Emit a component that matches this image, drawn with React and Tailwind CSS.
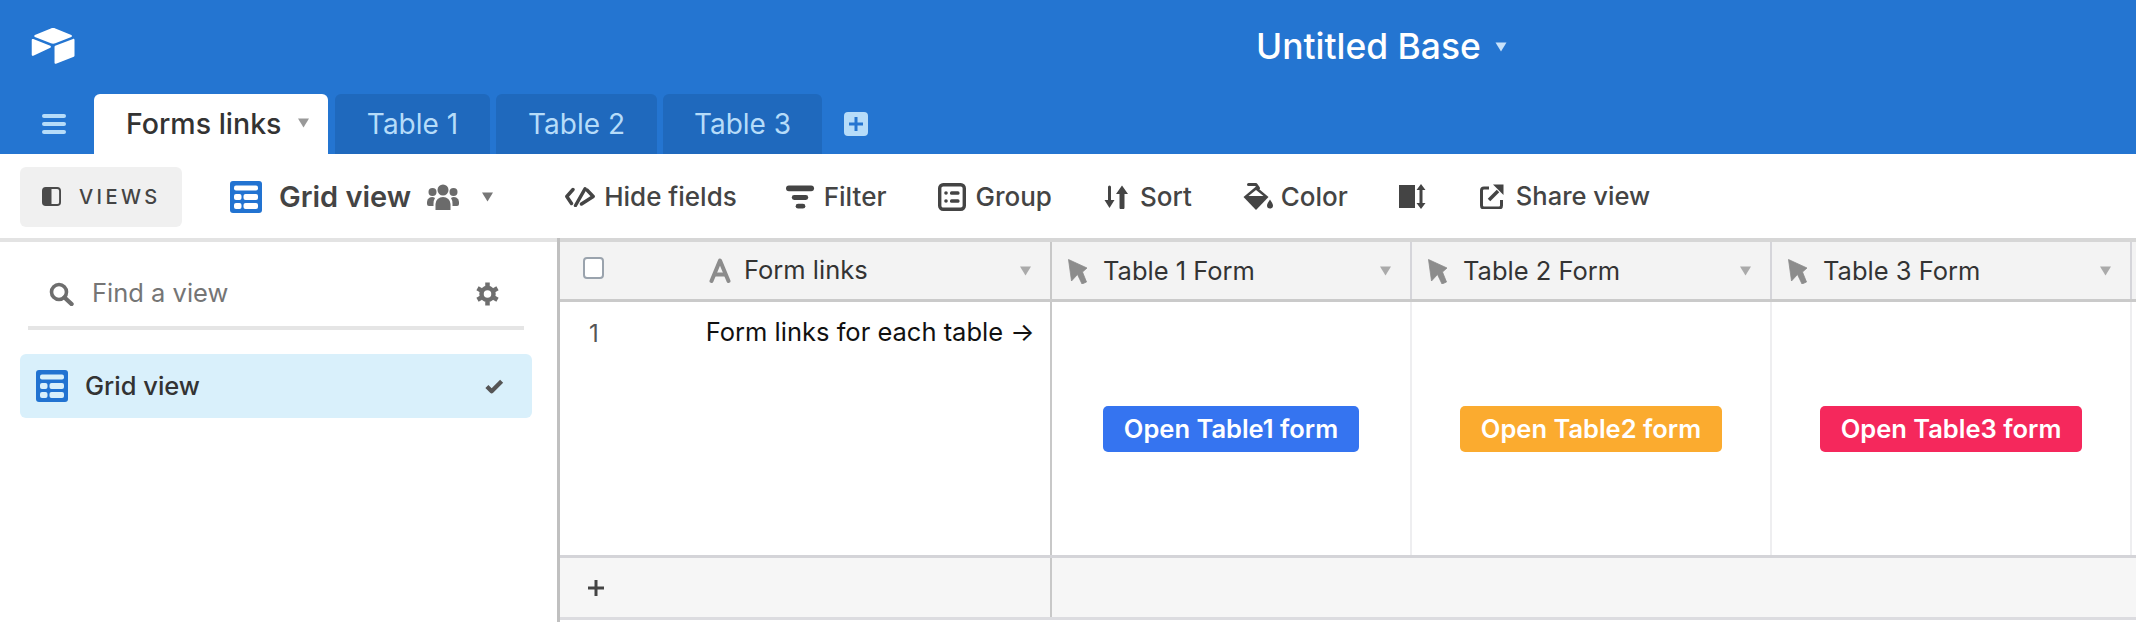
import React from "react";

const Caret = ({ className = "", fill = "#8e8e8e" }) => (
  <svg viewBox="0 0 12 10" className={className}><path d="M0.5 0.5h11L6 9.5z" fill={fill} /></svg>
);

const Logo = ({ className }) => (
  <svg viewBox="8 8 182 154" className={className} fill="#fff">
    <path d="M90.0389,12.3675 L24.0799,39.6605 C20.4119,41.1785 20.4499,46.3885 24.1409,47.8515 L90.3759,74.1175 C96.1959,76.4255 102.6769,76.4255 108.4959,74.1175 L174.7319,47.8515 C178.4219,46.3885 178.4609,41.1785 174.7919,39.6605 L108.8339,12.3675 C102.8159,9.8775 96.0559,9.8775 90.0389,12.3675" />
    <path d="M105.3122,88.4608 L105.3122,154.0768 C105.3122,157.1978 108.4592,159.3348 111.3602,158.1848 L185.1662,129.5368 C186.8512,128.8688 187.9562,127.2408 187.9562,125.4288 L187.9562,59.8128 C187.9562,56.6918 184.8092,54.5548 181.9082,55.7048 L108.1022,84.3528 C106.4182,85.0208 105.3122,86.6488 105.3122,88.4608" />
    <path d="M88.0781,91.8464 L66.1741,102.4224 L63.9501,103.4974 L17.7121,125.6524 C14.7811,127.0664 11.0401,124.9304 11.0401,121.6744 L11.0401,60.0884 C11.0401,58.9104 11.6441,57.8934 12.4541,57.1274 C12.7921,56.7884 13.1751,56.5094 13.5731,56.2884 C14.6781,55.6254 16.2541,55.4484 17.5941,55.9784 L87.7101,83.7594 C91.2741,85.1734 91.5541,90.1674 88.0781,91.8464" />
  </svg>
);

const GridIcon = ({ className, hole = "#ffffff" }) => (
  <svg viewBox="0 0 32 32" className={className}>
    <rect width="32" height="32" rx="3" fill="#2273d1" />
    <g fill={hole}>
      <rect x="4" y="4.5" width="24" height="5" rx="2" />
      <rect x="4" y="13" width="7.5" height="6" rx="2" />
      <rect x="13.5" y="13" width="14.5" height="6" rx="2" />
      <rect x="4" y="22" width="7.5" height="6" rx="2" />
      <rect x="13.5" y="22" width="14.5" height="6" rx="2" />
    </g>
  </svg>
);

const Views = () => (
  <svg viewBox="0 0 20 20" className="w-[19px] h-[19px]">
    <rect x="1" y="1" width="18" height="18" rx="3" fill="none" stroke="#4a4a4a" strokeWidth="2" />
    <path d="M1 4a3 3 0 0 1 3-3h6v18H4a3 3 0 0 1-3-3z" fill="#4a4a4a" />
  </svg>
);

const People = () => (
  <svg viewBox="0 0 32 26" className="w-[32px] h-[26px]" fill="#6b6b6b">
    <circle cx="16" cy="6" r="5.5" />
    <circle cx="5.5" cy="8" r="4" />
    <circle cx="26.5" cy="8" r="4" />
    <path d="M8.5 26v-6a7.5 7 0 0 1 15 0v6z" />
    <path d="M0 20v-2a5 5 0 0 1 8-4a10 10 0 0 0-1.5 6v2H2a2 2 0 0 1-2-2z" />
    <path d="M32 20v-2a5 5 0 0 0-8-4a10 10 0 0 1 1.5 6v2H30a2 2 0 0 0 2-2z" />
  </svg>
);

const HideIcon = () => (
  <svg viewBox="0 0 30 20" className="w-[30px] h-[20px]" fill="none" stroke="#444" strokeWidth="3.4" strokeLinecap="round" strokeLinejoin="round">
    <path d="M8 2.5L1.8 9.5L6.5 16.5" />
    <path d="M22 3L28.2 9.5L16.5 17" />
    <path d="M20 1.8L10.5 18.5" />
  </svg>
);

const FilterIcon = () => (
  <svg viewBox="0 0 30 24" className="w-[29px] h-[24px]" fill="#444">
    <rect x="0" y="0" width="29" height="6" rx="3" />
    <rect x="6" y="10" width="17" height="5" rx="2.5" />
    <rect x="10" y="19" width="10" height="5" rx="2.5" />
  </svg>
);

const GroupIcon = () => (
  <svg viewBox="0 0 28 28" className="w-[28px] h-[28px]">
    <rect x="1.7" y="1.7" width="24.6" height="24.6" rx="3.5" fill="none" stroke="#444" strokeWidth="3.4" />
    <g fill="#444">
      <circle cx="8" cy="10" r="1.8" />
      <circle cx="8" cy="18" r="1.8" />
      <rect x="12" y="8.2" width="9.5" height="3.6" rx="1.5" />
      <rect x="12" y="16.2" width="9.5" height="3.6" rx="1.5" />
    </g>
  </svg>
);

const SortIcon = () => (
  <svg viewBox="0 0 25 24" className="w-[25px] h-[24px]" fill="#444">
    <path d="M4 2a1.5 1.5 0 0 1 3 0v13h3.5L5.5 23 .5 15H4z" />
    <path d="M15.5 9H12l6-8.5L24 9h-3.5v13.5a2.5 2 0 0 1-5 0z" />
  </svg>
);

const ColorIcon = () => (
  <svg viewBox="0 0 31 28" className="w-[31px] h-[28px]">
    <path d="M5.5 1.5H13L15.5 5" fill="none" stroke="#444" strokeWidth="3" strokeLinecap="round" strokeLinejoin="round" />
    <path d="M13 3.5L25.5 14L13 27L0.5 14Z" fill="#444" />
    <path d="M13 7L20.5 13H5.500Z" fill="#fff" />
    <path d="M27 16.5c1.5 2.500 3 4.200 3 6a3 3 0 0 1-6 0c0-1.800 1.500-3.500 3-6z" fill="#444" />
  </svg>
);

const RowIcon = () => (
  <svg viewBox="0 0 27 25" className="w-[27px] h-[25px]" fill="#444">
    <rect x="0" y="1" width="16" height="23" />
    <path d="M22 0l4.5 6h-3v13h3L22 25l-4.5-6h3V6h-3z" />
  </svg>
);

const ShareIcon = () => (
  <svg viewBox="0 0 24 25" className="w-[24px] h-[25px]" fill="none" stroke="#444" strokeWidth="3">
    <path d="M9 4H4a2.5 2.5 0 0 0-2.5 2.5v15A2.500 2.500 0 0 0 4 24h15a2.500 2.500 0 0 0 2.500-2.500V16" />
    <path d="M9 16L18 7" strokeWidth="3.6" />
    <path d="M13 0.5h10.5V11z" fill="#444" stroke="none" />
  </svg>
);

const Cursor = () => (
  <svg viewBox="0 0 19 25" className="w-[19px] h-[25px]">
    <path d="M0.5 0.5L19 9L14.5 13L18.500 23L14 25L9.500 15.500L3.500 22Z" fill="#8c8c8c" strokeLinejoin="round" stroke="#8c8c8c" strokeWidth="0.800" />
  </svg>
);

const AIcon = () => (
  <svg viewBox="0 0 22 25" className="w-[22px] h-[25px]" fill="none" stroke="#8c8c8c" strokeWidth="4" strokeLinejoin="round" strokeLinecap="round">
    <path d="M2.500 23L11 2.500L19.500 23" />
    <path d="M6 16.500h10" />
  </svg>
);

const SearchIcon = () => (
  <svg viewBox="0 0 25 24" className="w-[25px] h-[24px]" fill="none" stroke="#6e6e6e">
    <circle cx="10" cy="10" r="7.5" strokeWidth="3.6" />
    <path d="M15.5 15.5L22.5 22" strokeWidth="4.4" strokeLinecap="round" />
  </svg>
);

const GearIcon = () => (
  <svg viewBox="0 0 24 24" className="w-[25px] h-[24px]">
    <circle cx="12" cy="12" r="6" fill="none" stroke="#6e6e6e" strokeWidth="4.5" />
    <g stroke="#6e6e6e" strokeWidth="4.5" strokeLinecap="butt">
      <path d="M12 0.5v4M12 19.5v4" />
      <path d="M2 6.25l3.5 2M18.5 15.75l3.5 2" />
      <path d="M2 17.75l3.5-2M18.5 8.25l3.5-2" />
    </g>
  </svg>
);

const CheckIcon = () => (
  <svg viewBox="0 0 20 15" className="w-[19px] h-[15px]" fill="none" stroke="#555" strokeWidth="4.5" strokeLinejoin="round">
    <path d="M2 7.5L7 12.5L17.5 2" />
  </svg>
);

const Tool = ({ icon, label, gapClass, className, textClass = "text-[26px]" }) => (
  <div className={`flex items-center ${gapClass} ${className}`}>
    {icon}
    <span className={`${textClass} font-medium text-[#444]`}>{label}</span>
  </div>
);

const HeaderCell = ({ label }) => (
  <div className="w-[360px] h-full flex items-center pl-[16px] pt-[1px] border-r-2 border-[#d5d5da]">
    <Cursor />
    <span className="ml-[16px] text-[25.5px] text-[#333]">{label}</span>
    <Caret className="w-[13px] h-[10px] ml-auto mr-[18px]" fill="#aaa" />
  </div>
);

const ButtonCell = ({ label, color }) => (
  <div className="w-[360px] h-full flex items-center justify-center pt-[1px] border-r-2 border-[#eeeef0]">
    <div className={`h-[46px] rounded-[5px] px-[21px] flex items-center text-white text-[25.5px] font-semibold ${color}`}>{label}</div>
  </div>
);

export default function App() {
  return (
    <div className="w-[2136px] h-[622px] flex flex-col overflow-hidden bg-white [font-family:Inter,sans-serif]">
      <div className="h-[154px] bg-[#2475d1] flex flex-col">
        <div className="h-[94px] flex items-center pl-[31px]">
          <Logo className="w-[44px] h-[38px] mb-[2px]" />
          <div className="ml-[1181px] flex items-center">
            <span className="text-[35.4px] font-medium text-white">Untitled Base</span>
            <Caret className="w-[14px] h-[10px] ml-[13px]" fill="#c8e2fa" />
          </div>
        </div>
        <div className="h-[60px] flex items-end">
          <div className="w-[24px] h-[20px] ml-[42px] mb-[20px] flex flex-col justify-between">
            <div className="h-[4px] rounded-full bg-[#b6dcf9]" />
            <div className="h-[4px] rounded-full bg-[#b6dcf9]" />
            <div className="h-[4px] rounded-full bg-[#b6dcf9]" />
          </div>
          <div className="ml-[28px] w-[234px] h-[60px] bg-white rounded-t-[6px] flex items-center pl-[32px]">
            <span className="text-[28.5px] font-medium text-[#333]">Forms links</span>
            <Caret className="w-[13px] h-[10px] ml-[16px] mb-[3px]" fill="#999" />
          </div>
          <div className="ml-[7px] w-[155px] h-[60px] bg-[#1f69bd] rounded-t-[6px] flex items-center justify-center text-[28px] text-[#b6dcf9]">Table 1</div>
          <div className="ml-[6px] w-[161px] h-[60px] bg-[#1f69bd] rounded-t-[6px] flex items-center justify-center text-[28px] text-[#b6dcf9]">Table 2</div>
          <div className="ml-[6px] w-[159px] h-[60px] bg-[#1f69bd] rounded-t-[6px] flex items-center justify-center text-[28px] text-[#b6dcf9]">Table 3</div>
          <div className="ml-[22px] mb-[18px] w-[24px] h-[24px] rounded-[4px] bg-[#b6dcf9] flex items-center justify-center">
            <svg viewBox="0 0 14 14" className="w-[14px] h-[14px]"><path d="M5.5 0h3v5.5H14v3H8.5V14h-3V8.5H0v-3h5.5z" fill="#2475d1" /></svg>
          </div>
        </div>
      </div>

      <div className="h-[84px] flex items-center pl-[20px] pt-[1px]">
        <div className="w-[162px] h-[60px] rounded-[6px] bg-[#f0f0f0] flex items-center pl-[22px]">
          <Views />
          <span className="ml-[18px] text-[20px] font-medium tracking-[0.17em] text-[#444]">VIEWS</span>
        </div>
        <GridIcon className="ml-[48px] w-[32px] h-[32px]" />
        <span className="ml-[17px] text-[29px] font-semibold text-[#444]">Grid view</span>
        <div className="ml-[16px]"><People /></div>
        <Caret className="ml-[22px] w-[13px] h-[10px]" fill="#777" />
        <Tool icon={<HideIcon />} label="Hide fields" gapClass="gap-[9px]" className="ml-[71px]" />
        <Tool icon={<FilterIcon />} label="Filter" gapClass="gap-[9px]" className="ml-[49px]" />
        <Tool icon={<GroupIcon />} label="Group" gapClass="gap-[9px]" className="ml-[52px]" />
        <Tool icon={<SortIcon />} label="Sort" gapClass="gap-[11px]" className="ml-[52px]" />
        <Tool icon={<ColorIcon />} label="Color" gapClass="gap-[7px]" className="ml-[51px]" />
        <div className="ml-[51px]"><RowIcon /></div>
        <Tool icon={<ShareIcon />} label="Share view" gapClass="gap-[12px]" className="ml-[54px]" textClass="text-[25.5px]" />
      </div>

      <div className="flex-1 flex min-h-0">
        <div className="w-[557px] border-t-4 border-[#e3e3e3] pl-[20px] pr-[25px]">
          <div className="h-[88px] mx-[8px] border-b-4 border-[#e5e5e5] flex items-center pl-[21px] pr-[24px] pt-[19px]">
            <SearchIcon />
            <span className="ml-[18px] text-[25.5px] text-[#757575]">Find a view</span>
            <div className="ml-auto"><GearIcon /></div>
          </div>
          <div className="mt-[24px] h-[64px] rounded-[6px] bg-[#d9f0fb] flex items-center pl-[16px] pr-[28px]">
            <GridIcon className="w-[32px] h-[32px]" hole="#d9f0fb" />
            <span className="ml-[17px] text-[25.5px] font-medium text-[#333]">Grid view</span>
            <div className="ml-auto"><CheckIcon /></div>
          </div>
        </div>

        <div className="flex-1 border-l-[3px] border-[#c0c0c0] flex flex-col">
          <div className="h-[64px] border-t-4 border-b-[3px] border-t-[#d6d6d6] border-b-[#cacaca] bg-[#f3f3f3] flex">
            <div className="w-[492px] h-full border-r-2 border-[#c8c8c8] flex items-center pl-[23px]">
              <div className="w-[21px] h-[22px] mb-[6px] rounded-[4px] border-2 border-[#9aa3ad] bg-white" />
              <div className="ml-[105px]"><AIcon /></div>
              <span className="ml-[13px] text-[25.5px] text-[#333]">Form links</span>
              <Caret className="w-[13px] h-[10px] ml-auto mr-[18px]" fill="#aaa" />
            </div>
            <HeaderCell label="Table 1 Form" />
            <HeaderCell label="Table 2 Form" />
            <HeaderCell label="Table 3 Form" />
          </div>
          <div className="h-[253px] flex">
            <div className="w-[492px] h-full border-r-2 border-[#c8c8c8] flex items-start pt-[16px] pl-[29px]">
              <span className="text-[24px] leading-[32px] text-[#555]">1</span>
              <span className="ml-[107px] -mt-[2px] text-[25.5px] leading-[32px] text-[#111] whitespace-nowrap">Form links for each table →</span>
            </div>
            <ButtonCell label="Open Table1 form" color="bg-[#3574f0]" />
            <ButtonCell label="Open Table2 form" color="bg-[#fbab2f]" />
            <ButtonCell label="Open Table3 form" color="bg-[#f5285c]" />
          </div>
          <div className="h-[65px] bg-[#f6f6f6] border-y-[3px] border-t-[#d4d4d8] border-b-[#dcdce0] flex">
            <div className="w-[492px] h-full border-r-2 border-[#c8c8c8] flex items-center pl-[28px]">
              <svg viewBox="0 0 16 16" className="w-[16px] h-[16px]"><path d="M6.5 0h3v6.5H16v3H9.5V16h-3V9.5H0v-3h6.5z" fill="#444" /></svg>
            </div>
          </div>
        </div>
      </div>
    </div>
  );
}
